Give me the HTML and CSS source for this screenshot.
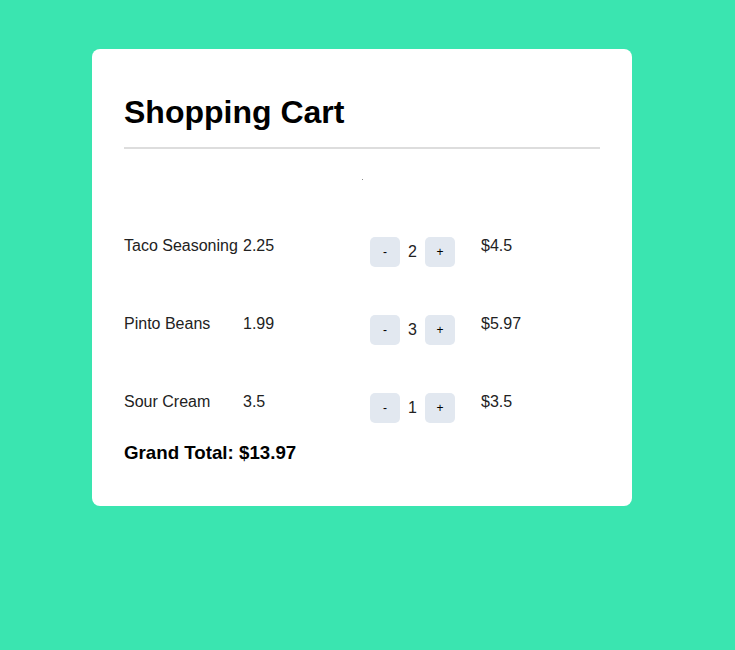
FILE: index.html
```html
<!DOCTYPE html>
<html lang="en">
<head>
<meta charset="utf-8">
<title>Shopping Cart</title>
<link rel="stylesheet" href="styles.css">
</head>
<body>
<div class="page">
  <div class="card">
    <h1 class="title">Shopping Cart</h1>
    <div class="rule"></div>
    <div class="loader"><span class="dot"></span></div>
    <div class="rows">
      <div class="row">
        <span class="name">Taco Seasoning</span>
        <span class="price">2.25</span>
        <div class="qty">
          <button class="btn">-</button>
          <span class="count">2</span>
          <button class="btn">+</button>
        </div>
        <span class="total">$4.5</span>
      </div>
      <div class="row">
        <span class="name">Pinto Beans</span>
        <span class="price">1.99</span>
        <div class="qty">
          <button class="btn">-</button>
          <span class="count">3</span>
          <button class="btn">+</button>
        </div>
        <span class="total">$5.97</span>
      </div>
      <div class="row">
        <span class="name">Sour Cream</span>
        <span class="price">3.5</span>
        <div class="qty">
          <button class="btn">-</button>
          <span class="count">1</span>
          <button class="btn">+</button>
        </div>
        <span class="total">$3.5</span>
      </div>
    </div>
    <div class="grand">Grand Total: $13.97</div>
  </div>
</div>
</body>
</html>
```
FILE: styles.css
```css
html, body {
  margin: 0;
  padding: 0;
  background: #3ae5b0;
  font-family: "Liberation Sans", Arial, sans-serif;
}
.page {
  padding: 49px 0 0 92px;
  min-height: 650px;
  box-sizing: border-box;
}
.card {
  width: 540px;
  box-sizing: border-box;
  background: #fff;
  border-radius: 8px;
  padding: 45px 32px 43px 32px;
}
.title {
  margin: 0;
  font-size: 32px;
  line-height: 37px;
  font-weight: bold;
  color: #000;
}
.rule {
  margin-top: 16px;
  height: 2px;
  background: #dddddd;
}
.loader {
  height: 87px;
  box-sizing: border-box;
  padding-top: 30px;
  display: flex;
  justify-content: center;
}
.dot {
  width: 1px;
  height: 1px;
  background: #8a8a8a;
}
.rows {
  display: flex;
  flex-direction: column;
  gap: 47px;
}
.row {
  display: grid;
  grid-template-columns: 119px 127px 111px 1fr;
  align-items: start;
  font-size: 16px;
  line-height: 18px;
  color: #222;
}
.name, .price, .total {
  padding-top: 1px;
}
.qty {
  display: flex;
  align-items: center;
  margin-top: 1px;
}
.btn {
  width: 30px;
  height: 30px;
  border: none;
  border-radius: 5px;
  background: #e2e8f0;
  color: #000;
  font-family: "Liberation Sans", Arial, sans-serif;
  font-size: 12px;
  padding: 0;
}
.count {
  width: 25px;
  text-align: center;
  font-size: 16px;
  color: #222;
}
.grand {
  margin-top: 19px;
  font-size: 18.72px;
  line-height: 21px;
  font-weight: bold;
  color: #000;
}
```
